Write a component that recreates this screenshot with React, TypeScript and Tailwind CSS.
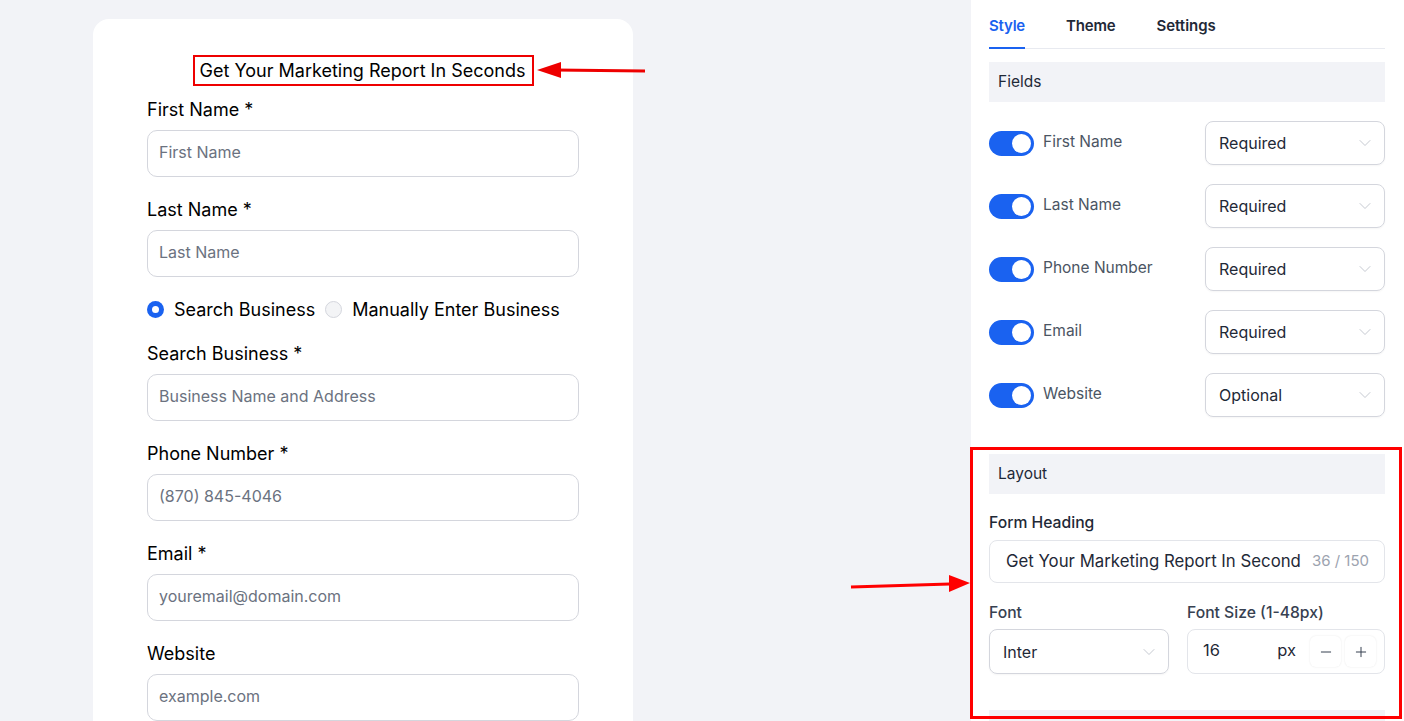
import { ChevronDown, Minus, Plus } from 'lucide-react';

const formFields = [
  { label: 'First Name *', placeholder: 'First Name' },
  { label: 'Last Name *', placeholder: 'Last Name' },
];

const moreFields = [
  { label: 'Search Business *', placeholder: 'Business Name and Address' },
  { label: 'Phone Number *', placeholder: '(870) 845-4046' },
  { label: 'Email *', placeholder: 'youremail@domain.com' },
  { label: 'Website', placeholder: 'example.com' },
];

const toggles = [
  { name: 'First Name', mode: 'Required' },
  { name: 'Last Name', mode: 'Required' },
  { name: 'Phone Number', mode: 'Required' },
  { name: 'Email', mode: 'Required' },
  { name: 'Website', mode: 'Optional' },
];

function Field({ label, placeholder }: { label: string; placeholder: string }) {
  return (
    <div className="mb-5">
      <div className="h-[25px] pt-px text-[18px] leading-6 text-black">{label}</div>
      <div className="mt-[8px] h-[47px] rounded-[10px] border border-[#d4d6dd] flex items-center pl-[11px] pb-[3px] text-[16px] text-[#6b7280]">
        {placeholder}
      </div>
    </div>
  );
}

function Select({ value, width }: { value: string; width: string }) {
  return (
    <div className={`${width} h-[44px] rounded-lg border border-[#d4d6dd] flex items-center justify-between pl-[13px] pr-[9px] text-[16px] text-[#1f2937] shadow-[0_1px_2px_rgba(0,0,0,0.04)]`}>
      <span>{value}</span>
      <ChevronDown className="w-5 h-5 text-[#c0c4cc]" strokeWidth={1.1} />
    </div>
  );
}

export default function App() {
  return (
    <div className="relative w-[1404px] h-[721px] overflow-hidden bg-[#f2f3f7] flex" style={{ fontFamily: 'Inter, "Noto Sans", sans-serif' }}>
      {/* Form preview */}
      <div className="w-[971px] pl-[93px] pt-[19px]">
        <div className="w-[540px] h-[760px] bg-white rounded-2xl px-[54px] pt-9">
          <div className="flex justify-center mb-[11px] pl-[1px]">
            <span className="border-2 border-[#ee0000] pl-[5px] pr-[7px] h-[31px] flex items-center text-[18px] text-black">
              Get Your Marketing Report In Seconds
            </span>
          </div>
          {formFields.map((f) => (
            <Field key={f.label} {...f} />
          ))}
          <div className="flex items-center h-6 mb-5 text-[18px] text-black">
            <span className="w-[17px] h-[17px] rounded-full bg-[#1a62f0] flex items-center justify-center mr-[10px]">
              <span className="w-[7px] h-[7px] rounded-full bg-white" />
            </span>
            <span className="mr-[10px]">Search Business</span>
            <span className="w-[17px] h-[17px] rounded-full bg-[#f3f4f6] border border-[#d4d6dd] mr-[10px]" />
            <span>Manually Enter Business</span>
          </div>
          {moreFields.map((f) => (
            <Field key={f.label} {...f} />
          ))}
        </div>
      </div>

      {/* Settings panel */}
      <div className="relative w-[433px] bg-white pl-[18px] pr-[19px]">
        <div className="flex gap-[41px] border-b border-[#e8eaf0] h-[49px] items-center pt-1 text-[15px] font-semibold">
          <div className="relative h-full flex items-center text-[#1a62f0] tracking-[-0.2px]">
            Style
            <span className="absolute left-0 right-0 bottom-[-1px] h-[2px] bg-[#1a62f0]" />
          </div>
          <div className="text-[#1f2937] tracking-[-0.2px]">Theme</div>
          <div className="text-[#1f2937]">Settings</div>
        </div>

        <div className="mt-[13px] h-10 bg-[#f2f3f7] flex items-center px-[9px] text-[15.5px] text-[#1f2937]">Fields</div>

        <div className="mt-[19px] flex flex-col gap-[19px]">
          {toggles.map((t) => (
            <div key={t.name} className="flex items-center justify-between h-[44px]">
              <div className="flex items-center gap-[9px]">
                <span className="w-[45px] h-[25px] rounded-full bg-[#1a62f0] flex items-center justify-end pr-[3px]">
                  <span className="w-[19px] h-[19px] rounded-full bg-white" />
                </span>
                <span className="text-[15.5px] text-[#4b5563] -mt-[3px]">{t.name}</span>
              </div>
              <Select value={t.mode} width="w-[180px]" />
            </div>
          ))}
        </div>

        <div className="mt-[37px] h-10 bg-[#f2f3f7] flex items-center px-[9px] text-[15.5px] text-[#1f2937]">Layout</div>

        <div className="mt-[19px] h-[19px] text-[15.7px] font-medium text-[#1f2937] leading-[18px] pt-px">Form Heading</div>
        <div className="mt-[8px] h-[43px] rounded-lg border border-[#e3e5ea] flex items-center pl-4 pr-[15px] text-[16.8px] text-[#1f2937] overflow-hidden">
          <span className="whitespace-nowrap overflow-hidden flex-1">Get Your Marketing Report In Second</span>
          <span className="ml-[10px] text-[15px] text-[#9ca3af] whitespace-nowrap">36 / 150</span>
        </div>

        <div className="mt-[20px] flex gap-[18px]">
          <div>
            <div className="h-[18px] pt-px text-[15.7px] font-medium text-[#374151] leading-[18px]">Font</div>
            <div className="mt-[8px]">
              <Select value="Inter" width="w-[180px] h-[45px]" />
            </div>
          </div>
          <div className="flex-1">
            <div className="h-[18px] pt-px text-[15.7px] font-medium text-[#374151] leading-[18px]">Font Size (1-48px)</div>
            <div className="mt-[8px] h-[45px] rounded-lg border border-[#e3e5ea] flex items-center pl-[15px] pr-2 text-[16.5px] text-[#1f2937]">
              <span className="flex-1 -mt-[2px]">16</span>
              <span className="mr-[14px] -mt-[2px]">px</span>
              <span className="w-[31px] h-[31px] rounded-md shadow-[0_0_2px_rgba(0,0,0,0.1)] flex items-center justify-center">
                <Minus className="w-4 h-4 text-[#374151]" strokeWidth={1.5} />
              </span>
              <span className="ml-[4px] w-[31px] h-[31px] rounded-md shadow-[0_0_2px_rgba(0,0,0,0.1)] flex items-center justify-center">
                <Plus className="w-4 h-4 text-[#374151]" strokeWidth={1.5} />
              </span>
            </div>
          </div>
        </div>

        <div className="mt-9 h-10 bg-[#f2f3f7]" />

        {/* annotation box */}
        <div className="absolute left-[-1px] top-[447px] w-[432px] h-[272px] border-[3px] border-[#ff0000]" />
      </div>

      {/* annotation arrows */}
      <svg className="absolute left-0 top-0 pointer-events-none" width="1404" height="721">
        <line x1="645" y1="71" x2="555" y2="70" stroke="#ee0000" strokeWidth="3" />
        <polygon points="537,70 561,62 561,78" fill="#ee0000" />
        <line x1="851" y1="587" x2="950" y2="584" stroke="#ff0000" strokeWidth="3" />
        <polygon points="970,583 949,575 949,592" fill="#ff0000" />
      </svg>
    </div>
  );
}
